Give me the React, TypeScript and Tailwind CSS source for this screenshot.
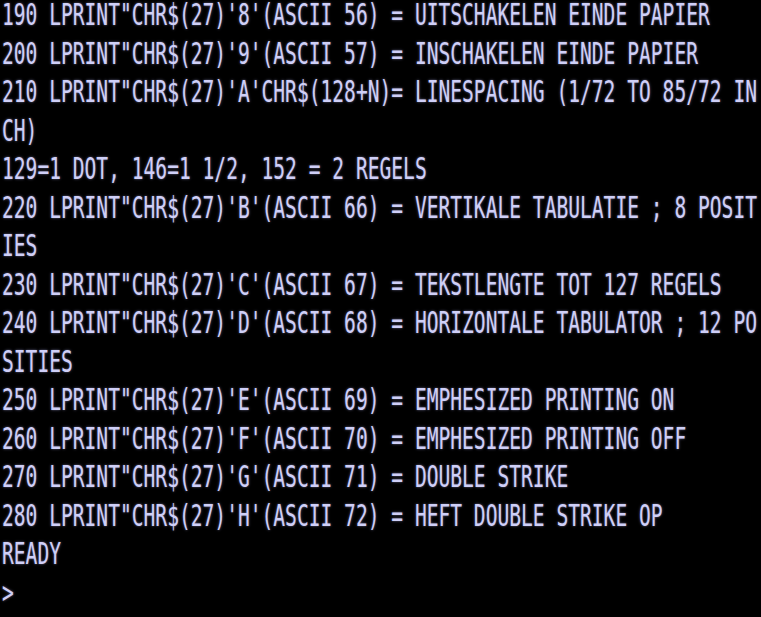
import React from 'react';

const lines = [
	`190 LPRINT"CHR$(27)'8'(ASCII 56) = UITSCHAKELEN EINDE PAPIER`,
	`200 LPRINT"CHR$(27)'9'(ASCII 57) = INSCHAKELEN EINDE PAPIER`,
	`210 LPRINT"CHR$(27)'A'CHR$(128+N)= LINESPACING (1/72 TO 85/72 IN`,
	`CH)`,
	`129=1 DOT, 146=1 1/2, 152 = 2 REGELS`,
	`220 LPRINT"CHR$(27)'B'(ASCII 66) = VERTIKALE TABULATIE ; 8 POSIT`,
	`IES`,
	`230 LPRINT"CHR$(27)'C'(ASCII 67) = TEKSTLENGTE TOT 127 REGELS`,
	`240 LPRINT"CHR$(27)'D'(ASCII 68) = HORIZONTALE TABULATOR ; 12 PO`,
	`SITIES`,
	`250 LPRINT"CHR$(27)'E'(ASCII 69) = EMPHESIZED PRINTING ON`,
	`260 LPRINT"CHR$(27)'F'(ASCII 70) = EMPHESIZED PRINTING OFF`,
	`270 LPRINT"CHR$(27)'G'(ASCII 71) = DOUBLE STRIKE`,
	`280 LPRINT"CHR$(27)'H'(ASCII 72) = HEFT DOUBLE STRIKE OP`,
	`READY`,
	`>`,
];

export default function App() {
	return (
		<div className="w-[761px] h-[617px] bg-black overflow-hidden pl-[2px] font-['DejaVu_Sans_Mono',monospace] text-[#cfcff7] [text-shadow:0_0_2px_rgba(190,190,255,0.55)]">
			{lines.map((line, i) => (
				<div key={i} className="h-[38.5px]">
					<span className="inline-block whitespace-pre text-[19.6px] leading-[20px] origin-top scale-y-[1.53]">
						{line}
					</span>
				</div>
			))}
		</div>
	);
}
